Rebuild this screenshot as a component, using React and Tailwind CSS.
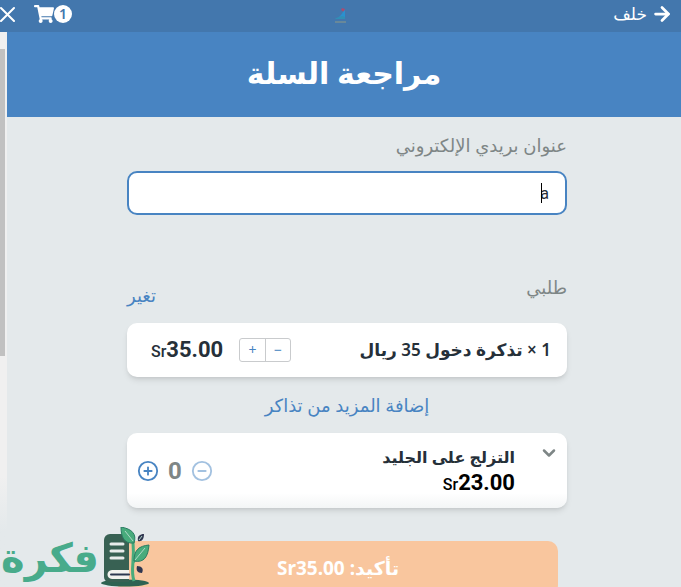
import React, { useState } from "react";
import { FaShoppingCart } from "react-icons/fa";
import { ArrowRight, ChevronDown, CirclePlus, CircleMinus } from "lucide-react";

const Price = ({ amount, className }) => (
  <span dir="ltr" className={`font-[Roboto,sans-serif] text-[22px] leading-7 font-bold ${className}`}>
    <span className="text-base font-medium">Sr</span>
    {amount}
  </span>
);

const TopBar = () => (
  <header className="grid h-8 shrink-0 grid-cols-3 items-center bg-[#4377ad] text-white">
    <button type="button" className="flex items-center gap-1 justify-self-start pr-2 pb-1 text-[17px]">
      <ArrowRight size={22} strokeWidth={3} />
      <span>خلف</span>
    </button>
    {/* Venue logo */}
    <svg viewBox="0 0 14 18" className="h-[18px] w-[14px] justify-self-center">
      <path d="M8 1l3 1-1 3-3-2z" fill="#a84d72" />
      <path d="M11 3v8L3 12l4-4 2-3z" fill="#2b91cf" />
      <path d="M2 11l6-2 3 1v2H1z" fill="#318fb6" />
      <path d="M1 15h11" stroke="#8f9a86" strokeWidth="1" />
    </svg>
    <div className="flex items-center gap-[18px] justify-self-end pb-1">
      <button type="button" aria-label="السلة" className="flex items-center">
        <span className="flex size-[18px] items-center justify-center rounded-full bg-white text-sm font-semibold text-[#4377ad]">
          1
        </span>
        <FaShoppingCart size={20} />
      </button>
      <button type="button" aria-label="إغلاق">
        <svg viewBox="0 0 16 16" className="size-4" stroke="currentColor" strokeWidth="2" strokeLinecap="round">
          <path d="M1 2l13 13M14 2L1 15" />
        </svg>
      </button>
    </div>
  </header>
);

const BrandMark = () => (
  <div className="absolute bottom-0 left-0 flex items-end" dir="ltr">
    <span lang="ar" dir="rtl" className="w-[100px] text-center text-[40px] leading-[60px] font-bold text-[#48ab8b]">
      فكرة
    </span>
    <svg viewBox="0 0 50 60" className="h-[60px] w-[50px]">
      <ellipse cx="25" cy="56" rx="24" ry="3.500" fill="#2e6352" />
      <path d="M10 7h19v48H9a5 5 0 0 1-5-5V13a6 6 0 0 1 6-6z" fill="#386153" />
      <path d="M11 17h12M11 24h12M11 31h12" stroke="#e8eceb" strokeWidth="3" strokeLinecap="round" />
      <path d="M29 43H12c-6 0-6 9 0 9h17" fill="#f2f2ee" />
      <path d="M11 47.500h18" stroke="#2c3850" strokeWidth="2" strokeLinecap="round" />
      <path d="M34 54c-4-12 1-18-1-39M33 36c1-4 5-6 8-10" fill="none" stroke="#48ab7c" strokeWidth="3" />
      <path d="M34 16C24 17 21 10 21 0c11 2 16 7 13 16z" fill="#48ab7c" stroke="#287b62" />
      <path d="M34 34c0-11 5-15 15-16-1 12-5 18-15 16z" fill="#48ab7c" stroke="#287b62" />
      <path d="M38 14c-1-5 2-7 6-7 0 5-2 8-6 7zM42 46c-5 0-6-3-5-7 5 0 7 3 5 7z" fill="#303650" />
      <path d="M33 14l-8-10M35 33l10-12M39 13l3-4" stroke="#b1d9c8" strokeWidth="1" />
    </svg>
  </div>
);

export default function App() {
  const [email, setEmail] = useState("a");

  return (
    <div
      dir="rtl"
      lang="ar"
      className="relative flex h-screen flex-col overflow-hidden bg-[#e4e9eb] font-['Noto_Sans','DejaVu_Sans',sans-serif] text-[#263039]"
    >
      <TopBar />
      <div className="flex min-h-0 flex-1">
        <main className="min-w-0 flex-1 overflow-hidden">
          <h1 className="bg-[#4884c2] pt-4 pb-5 text-center text-[30px] leading-[49px] font-semibold text-white">
            مراجعة السلة
          </h1>

          <div className="pl-[6px]">
            <div className="mx-auto w-full max-w-[440px]">
              <label htmlFor="email" className="block pt-[14px] text-lg leading-7 text-[#7e8686]">
                عنوان بريدي الإلكتروني
              </label>
              <div className="relative mt-3">
                <input
                  id="email"
                  type="text"
                  value={email}
                  onChange={(e) => setEmail(e.target.value)}
                  className="block h-11 w-full rounded-[10px] border-2 border-[#4884c2] bg-white px-4 font-[Roboto,sans-serif] text-base caret-transparent outline-none"
                />
                {/* Text cursor */}
                <span className="absolute top-3 right-[25px] h-5 w-px bg-black" />
              </div>

              <div className="mt-[58px] flex items-start justify-between text-lg leading-7">
                <h2 className="text-[#7e8686]">طلبي</h2>
                <a href="#change" className="mt-2 text-[#4884c2]">
                  تغير
                </a>
              </div>

              <section className="mt-[14px] flex h-[54px] items-center rounded-[10px] bg-white px-4 shadow-md">
                <h3 className="flex-1 text-[17px] leading-6 font-semibold">1 × تذكرة دخول 35 ريال</h3>
                <div className="flex h-6 w-[52px] rounded-[3px] border border-[#c9cbcd] text-sm text-[#4884c2]">
                  <button type="button" aria-label="إنقاص" className="flex flex-1 items-center justify-center border-l border-[#c9cbcd]">
                    −
                  </button>
                  <button type="button" aria-label="زيادة" className="flex flex-1 items-center justify-center">
                    +
                  </button>
                </div>
                <Price amount="35.00" className="mr-4 ml-2" />
              </section>

              <h2 className="mt-[14px] text-center text-lg leading-7 text-[#4884c2]">
                إضافة المزيد من تذاكر
              </h2>

              <section className="mt-[14px] flex h-[75px] rounded-[10px] bg-linear-to-b from-white from-80% to-[#f3f5f6] pr-2 pl-[10px] shadow-md">
                <button type="button" aria-label="تفاصيل" className="mt-2 h-6">
                  <ChevronDown size={20} strokeWidth={3} className="text-[#7e8686]" />
                </button>
                <div className="mr-6 flex flex-1 flex-col items-start pt-3">
                  <h3 className="text-base leading-6 font-semibold">التزلج على الجليد</h3>
                  <Price amount="23.00" className="text-black" />
                </div>
                <div className="flex items-center gap-[6px] text-[#4884c2]">
                  <button type="button" aria-label="إنقاص" disabled className="opacity-50">
                    <CircleMinus size={22} strokeWidth={2} />
                  </button>
                  <span className="w-5 text-center font-[Roboto,sans-serif] text-2xl font-bold text-[#7e8686]">0</span>
                  <button type="button" aria-label="زيادة">
                    <CirclePlus size={22} strokeWidth={2} />
                  </button>
                </div>
              </section>

              <div className="mt-[33px] mr-[9px] -ml-[9px]">
                <button
                  type="button"
                  className="h-[54px] w-full rounded-[10px] bg-[#f9c69e] text-[19px] leading-6 font-bold text-white"
                >
                  تأكيد: <bdi>Sr35.00</bdi>
                </button>
              </div>
            </div>
          </div>
        </main>

        {/* Scroll track */}
        <div className="w-[7px] shrink-0 bg-linear-to-b from-[#f0f0f0] from-80% to-[#e4e9eb] to-90% pt-[17px]">
          <div className="mr-[2px] h-[57%] bg-[#c1c1c1]" />
        </div>
      </div>
      <BrandMark />
    </div>
  );
}
